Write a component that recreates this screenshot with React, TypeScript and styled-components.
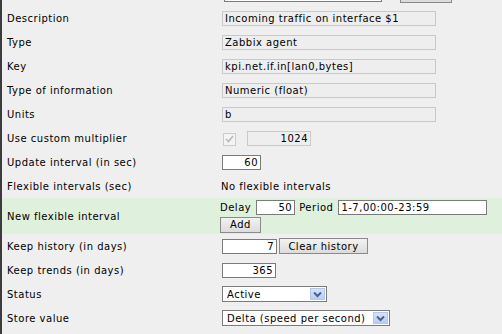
import React from 'react';
import styled, { createGlobalStyle, css } from 'styled-components';

const GlobalStyle = createGlobalStyle`
  html, body {
    margin: 0;
    padding: 0;
    background: #efefef;
  }
  body {
    font-family: "DejaVu Sans", Verdana, sans-serif;
    font-size: 10px;
    letter-spacing: 0.5px;
    color: #000;
  }
`;

const Page = styled.div`
  width: 502px;
  height: 334px;
  overflow: hidden;
  box-sizing: border-box;
  border-left: 2px solid #3c3c3c;
  background: #efefef;
`;

const CutRow = styled.div`
  height: 6px;
  overflow: hidden;
  display: flex;
  align-items: flex-start;
  padding-left: 220px;
  gap: 18px;
`;

const CutField = styled.span<{ $w: number; $h: number }>`
  box-sizing: border-box;
  width: ${({ $w }) => $w}px;
  height: ${({ $h }) => $h}px;
  margin-left: 2px;
  border: 1px solid #7b7b7b;
  border-top: none;
  background: #fff;
`;

const CutButton = styled.span<{ $w: number; $h: number }>`
  box-sizing: border-box;
  width: ${({ $w }) => $w}px;
  height: ${({ $h }) => $h}px;
  border: 1px solid #8a8a8a;
  border-top: none;
  background: #dcdcdc;
`;

const Row = styled.div<{ $tall?: boolean }>`
  display: grid;
  grid-template-columns: 218px 1fr;
  align-items: center;
  height: ${({ $tall }) => ($tall ? '36px' : '24px')};
  background: ${({ $tall }) => ($tall ? '#dff0dc' : 'transparent')};
`;

const Label = styled.div`
  padding-left: 5px;
  white-space: nowrap;
`;

const Value = styled.div`
  display: flex;
  align-items: center;
  gap: 2px;
  white-space: nowrap;
`;

const Stack = styled.div`
  display: flex;
  flex-direction: column;
  gap: 2px;
`;

const fieldText = css`
  box-sizing: border-box;
  font-family: "DejaVu Sans", Verdana, sans-serif;
  font-size: 10px;
  letter-spacing: 0.5px;
  height: 15px;
  padding: 0 2px;
  margin: 0;
  outline: none;
`;

const ReadOnlyField = styled.input<{ $w: number; $right?: boolean }>`
  ${fieldText}
  width: ${({ $w }) => $w}px;
  margin-left: 2px;
  background: #eeeeee;
  border: 1px solid #c9c9c9;
  color: #000;
  text-align: ${({ $right }) => ($right ? 'right' : 'left')};
`;

const Field = styled.input<{ $w: number; $right?: boolean; $ml?: number }>`
  ${fieldText}
  width: ${({ $w }) => $w}px;
  margin-left: ${({ $ml }) => $ml ?? 2}px;
  background: #fff;
  border: 1px solid #7b7b7b;
  color: #000;
  text-align: ${({ $right }) => ($right ? 'right' : 'left')};
`;

const Button = styled.button<{ $w: number }>`
  box-sizing: border-box;
  width: ${({ $w }) => $w}px;
  height: 16px;
  padding: 0;
  margin: 0;
  font-family: "DejaVu Sans", Verdana, sans-serif;
  font-size: 10px;
  letter-spacing: 0.5px;
  color: #000;
  background: linear-gradient(#f2f2f2, #dcdcdc);
  border: 1px solid #8a8a8a;
  cursor: pointer;
`;

const Check = styled.span`
  box-sizing: border-box;
  width: 13px;
  height: 13px;
  margin: 2px 7px 0 3px;
  border: 1px solid #cbcbcb;
  background: #f4f4f4;
  display: inline-flex;
  align-items: center;
  justify-content: center;
`;

const Select = styled.div<{ $w: number }>`
  box-sizing: border-box;
  width: ${({ $w }) => $w}px;
  height: 16px;
  margin-left: 2px;
  background: #fff;
  border: 1px solid #7b7b7b;
  display: flex;
  align-items: center;
  justify-content: space-between;
  padding-left: 4px;
`;

const Arrow = styled.span`
  box-sizing: border-box;
  width: 15px;
  height: 12px;
  margin-right: 1px;
  background: linear-gradient(#d6e2fb, #b9cdf7);
  border: 1px solid #b4c6ee;
  display: inline-flex;
  align-items: center;
  justify-content: center;
`;

const Text = styled.span<{ $pad?: number }>`
  padding-left: ${({ $pad }) => $pad ?? 0}px;
`;

function DropDown({ width, value }: { width: number; value: string }) {
  return (
    <Select $w={width}>
      <span>{value}</span>
      <Arrow>
        <svg width="9" height="7" viewBox="0 0 9 7">
          <path d="M1 1.5 L4.5 5 L8 1.5" fill="none" stroke="#4d6185" strokeWidth="2" />
        </svg>
      </Arrow>
    </Select>
  );
}

const readOnly = [
  ['Description', 'Incoming traffic on interface $1'],
  ['Type', 'Zabbix agent'],
  ['Key', 'kpi.net.if.in[lan0,bytes]'],
  ['Type of information', 'Numeric (float)'],
  ['Units', 'b'],
];

export default function App() {
  return (
    <Page>
      <GlobalStyle />
      <CutRow>
        <CutField $w={158} $h={2} />
        <CutButton $w={52} $h={3} />
      </CutRow>
      {readOnly.map(([label, value]) => (
        <Row key={label}>
          <Label>{label}</Label>
          <Value>
            <ReadOnlyField $w={214} readOnly value={value} />
          </Value>
        </Row>
      ))}
      <Row>
        <Label>Use custom multiplier</Label>
        <Value>
          <Check>
            <svg width="9" height="8" viewBox="0 0 9 8">
              <path d="M1 4 L3.5 6.5 L8 1" fill="none" stroke="#b9b9b9" strokeWidth="1.6" />
            </svg>
          </Check>
          <ReadOnlyField $w={64} $right readOnly value="1024" />
        </Value>
      </Row>
      <Row>
        <Label>Update interval (in sec)</Label>
        <Value>
          <Field $w={39} $right readOnly value="60" />
        </Value>
      </Row>
      <Row>
        <Label>Flexible intervals (sec)</Label>
        <Value>
          <Text $pad={1}>No flexible intervals</Text>
        </Value>
      </Row>
      <Row $tall>
        <Label>New flexible interval</Label>
        <Stack>
          <Value>
            <Text>Delay</Text>
            <Field $w={39} $right readOnly value="50" $ml={3} />
            <Text $pad={2}>Period</Text>
            <Field $w={149} readOnly value="1-7,00:00-23:59" $ml={3} />
          </Value>
          <Button $w={41}>Add</Button>
        </Stack>
      </Row>
      <Row>
        <Label>Keep history (in days)</Label>
        <Value>
          <Field $w={55} $right readOnly value="7" />
          <Button $w={89}>Clear history</Button>
        </Value>
      </Row>
      <Row>
        <Label>Keep trends (in days)</Label>
        <Value>
          <Field $w={54} $right readOnly value="365" />
        </Value>
      </Row>
      <Row>
        <Label>Status</Label>
        <Value>
          <DropDown width={105} value="Active" />
        </Value>
      </Row>
      <Row>
        <Label>Store value</Label>
        <Value>
          <DropDown width={168} value="Delta (speed per second)" />
        </Value>
      </Row>
    </Page>
  );
}
